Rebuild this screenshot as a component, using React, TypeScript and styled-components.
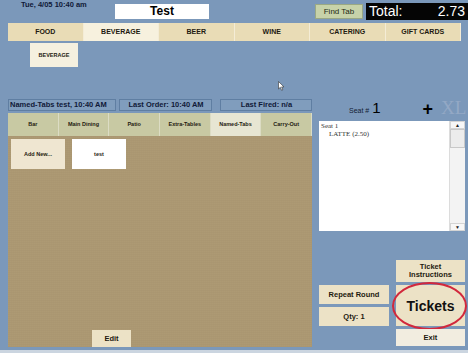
import React from 'react';
import styled, { createGlobalStyle } from 'styled-components';

const GlobalStyle = createGlobalStyle`
  html, body {
    margin: 0;
    padding: 0;
    background: #7b98ba;
  }
  * { box-sizing: border-box; }
`

const Screen = styled.div`
  position: relative;
  width: 468px;
  height: 353px;
  overflow: hidden;
  display: flex;
  flex-direction: column;
  background: #7b98ba;
  font-family: 'Liberation Sans', Arial, sans-serif;
  color: #141c34;
  border-bottom: 3px solid #cbd5e0;
`

const TopBar = styled.div`
  display: flex;
  align-items: flex-start;
  height: 23px;
  padding-left: 21px;
`

const DateText = styled.div`
  width: 94px;
  font-size: 7.5px;
  font-weight: bold;
  line-height: 9px;
  color: #101a38;
  white-space: nowrap;
`

const TitleBox = styled.div`
  margin-top: 4px;
  width: 94px;
  height: 15px;
  background: #fff;
  font-size: 12px;
  font-weight: bold;
  line-height: 15px;
  text-align: center;
  color: #000;
`

const FindTab = styled.div`
  margin-left: auto;
  margin-top: 4px;
  width: 48px;
  height: 15px;
  background: #c7d2a9;
  border: 1px solid #9aa884;
  font-size: 8px;
  line-height: 13px;
  text-align: center;
  color: #1e2a14;
`

const TotalBox = styled.div`
  display: flex;
  justify-content: space-between;
  margin-left: 3px;
  margin-top: 3px;
  width: 102px;
  height: 17px;
  padding: 0 3px;
  background: #050505;
  color: #fff;
  font-size: 14px;
  line-height: 17px;
`

const CategoryBar = styled.div`
  display: grid;
  grid-template-columns: repeat(6, 1fr);
  margin: 0 7px 0 8px;
  height: 18px;
`

const Category = styled.div<{ $active?: boolean }>`
  background: ${p => (p.$active ? '#f7f1de' : '#e9dcb6')};
  border-right: 1px solid #f4ecd6;
  font-size: 7px;
  font-weight: bold;
  line-height: 18px;
  text-align: center;
  color: #1e1a10;
`

const SubRow = styled.div`
  height: 56px;
  padding: 2px 0 0 30px;
`

const SubButton = styled.div`
  width: 48px;
  height: 24px;
  background: #f5f0df;
  font-size: 5.5px;
  font-weight: bold;
  line-height: 24px;
  text-align: center;
  color: #1e1a10;
`

const Cursor = styled.svg`
  position: absolute;
  left: 278px;
  top: 81px;
`

const Main = styled.div`
  flex: 1;
  display: grid;
  grid-template-columns: 304px 146px;
  column-gap: 7px;
  padding-left: 8px;
`

const LeftCol = styled.div`
  display: flex;
  flex-direction: column;
`

const InfoRow = styled.div`
  display: flex;
  margin-top: 2px;
  height: 12px;
`

const InfoBox = styled.div<{ $width: number; $gap?: number; $align?: string }>`
  width: ${p => p.$width}px;
  margin-left: ${p => p.$gap || 0}px;
  border: 1px solid #5f7ea2;
  background: #809dbd;
  font-size: 7.5px;
  font-weight: bold;
  line-height: 10px;
  text-align: ${p => p.$align || 'center'};
  padding-left: 1px;
  color: #111a38;
  white-space: nowrap;
  overflow: hidden;
`

const TabRow = styled.div`
  display: grid;
  grid-template-columns: repeat(6, 1fr);
  margin-top: 2px;
  height: 23px;
`

const Tab = styled.div<{ $active?: boolean }>`
  background: ${p => (p.$active ? '#e7e6d3' : '#c8c9a3')};
  border-right: 1px solid #dcdcc4;
  font-size: 5.5px;
  font-weight: bold;
  line-height: 23px;
  text-align: center;
  color: #1e1a10;
`

const TablePanel = styled.div`
  flex: 1;
  display: flex;
  flex-direction: column;
  padding: 3px 0 0 3px;
  margin-bottom: 3px;
  background-color: #ac9872;
  background-image:
    repeating-linear-gradient(0deg, rgba(0, 0, 0, 0.015) 0 1px, transparent 1px 2px),
    repeating-linear-gradient(90deg, rgba(255, 255, 255, 0.015) 0 1px, transparent 1px 2px);
`

const TableRow = styled.div`
  display: flex;
  gap: 7px;
`

const TableButton = styled.div<{ $white?: boolean }>`
  width: 54px;
  height: 30px;
  background: ${p => (p.$white ? '#ffffff' : '#efe6d1')};
  font-size: 5.5px;
  font-weight: bold;
  line-height: 30px;
  text-align: center;
  color: #1e1a10;
`

const EditButton = styled.div`
  margin-top: auto;
  margin-left: 81px;
  width: 39px;
  height: 17px;
  background: #ece2c6;
  font-size: 7.5px;
  font-weight: bold;
  line-height: 17px;
  text-align: center;
  color: #1e1a10;
`

const RightCol = styled.div`
  display: flex;
  flex-direction: column;
`

const SeatHeader = styled.div`
  display: flex;
  align-items: flex-end;
  height: 24px;
  padding-bottom: 5px;
  white-space: nowrap;
`

const SeatLabel = styled.div`
  margin-left: 30px;
  font-size: 7px;
  color: #141c34;
  display: flex;
  align-items: baseline;
  gap: 3px;

  & b {
    font-size: 15px;
    font-weight: normal;
    color: #000;
  }
`

const Plus = styled.div`
  margin-left: 42px;
  font-size: 18px;
  font-weight: bold;
  line-height: 14px;
  color: #000;
`

const XL = styled.div`
  flex-shrink: 0;
  margin-left: 8px;
  font-family: 'Liberation Serif', serif;
  font-size: 19px;
  line-height: 16px;
  color: #93a8c5;
`

const OrderList = styled.div`
  display: flex;
  height: 110px;
  background: #fff;
`

const OrderLines = styled.div`
  flex: 1;
  padding: 1px 2px;
  font-family: 'Liberation Serif', serif;
  font-size: 7px;
  line-height: 8px;
  color: #333;
`

const Indent = styled.div`
  padding-left: 8px;
`

const ScrollBar = styled.div`
  display: flex;
  flex-direction: column;
  width: 16px;
  background: #f3f3f3;
  border-left: 1px solid #dcdcdc;
`

const ScrollArrow = styled.div`
  height: 8px;
  background: #f7f7f7;
  border: 1px solid #d4d4d4;
  font-size: 5px;
  line-height: 6px;
  text-align: center;
  color: #222;
`

const ScrollThumb = styled.div`
  height: 19px;
  background: #ececec;
  border: 1px solid #c8c8c8;
`

const ScrollTrack = styled.div`
  flex: 1;
`

const ButtonGrid = styled.div`
  display: grid;
  grid-template-columns: 70px 1fr;
  grid-template-rows: 22px 19px 19px 17px;
  column-gap: 7px;
  row-gap: 3px;
  margin-top: 29px;
`

const ActionButton = styled.div<{ $col: number; $row: string; $light?: boolean }>`
  position: relative;
  grid-column: ${p => p.$col};
  grid-row: ${p => p.$row};
  display: flex;
  align-items: center;
  justify-content: center;
  background: ${p => (p.$light ? '#f2ede0' : '#ece2c6')};
  font-size: 7.5px;
  font-weight: bold;
  line-height: 8px;
  text-align: center;
  color: #1e1a10;
`

const BigLabel = styled.span`
  font-size: 14px;
  color: #111;
`

const Circle = styled.span`
  position: absolute;
  top: -3px;
  bottom: -4px;
  left: -4px;
  right: -2px;
  border: 2px solid #d2283c;
  border-radius: 50%;
`

const categories = ['FOOD', 'BEVERAGE', 'BEER', 'WINE', 'CATERING', 'GIFT CARDS']
const tabs = ['Bar', 'Main Dining', 'Patio', 'Extra-Tables', 'Named-Tabs', 'Carry-Out']

export default function App() {
  return (
    <>
      <GlobalStyle />
      <Screen>
        <TopBar>
          <DateText>Tue, 4/05 10:40 am</DateText>
          <TitleBox>Test</TitleBox>
          <FindTab>Find Tab</FindTab>
          <TotalBox>
            <span>Total:</span>
            <span>2.73</span>
          </TotalBox>
        </TopBar>

        <CategoryBar>
          {categories.map(c => (
            <Category key={c} $active={c === 'BEVERAGE'}>{c}</Category>
          ))}
        </CategoryBar>

        <SubRow>
          <SubButton>BEVERAGE</SubButton>
        </SubRow>

        <Cursor width="7" height="10" viewBox="0 0 7 10">
          <path d="M0.5 0.5 L0.5 8 L2.3 6.3 L3.6 9.3 L4.8 8.8 L3.6 5.9 L6 5.9 Z" fill="#fff" stroke="#333" strokeWidth="0.6" />
        </Cursor>

        <Main>
          <LeftCol>
            <InfoRow>
              <InfoBox $width={108} $align="left">Named-Tabs test, 10:40 AM</InfoBox>
              <InfoBox $width={93} $gap={3}>Last Order: 10:40 AM</InfoBox>
              <InfoBox $width={92} $gap={8}>Last Fired: n/a</InfoBox>
            </InfoRow>
            <TabRow>
              {tabs.map(t => (
                <Tab key={t} $active={t === 'Named-Tabs'}>{t}</Tab>
              ))}
            </TabRow>
            <TablePanel>
              <TableRow>
                <TableButton>Add New...</TableButton>
                <TableButton $white>test</TableButton>
              </TableRow>
              <EditButton>Edit</EditButton>
            </TablePanel>
          </LeftCol>

          <RightCol>
            <SeatHeader>
              <SeatLabel>Seat # <b>1</b></SeatLabel>
              <Plus>+</Plus>
              <XL>XL</XL>
            </SeatHeader>
            <OrderList>
              <OrderLines>
                <div>Seat 1</div>
                <Indent>LATTE (2.50)</Indent>
              </OrderLines>
              <ScrollBar>
                <ScrollArrow>▲</ScrollArrow>
                <ScrollThumb />
                <ScrollTrack />
                <ScrollArrow>▼</ScrollArrow>
              </ScrollBar>
            </OrderList>
            <ButtonGrid>
              <ActionButton $col={2} $row="1">Ticket<br />Instructions</ActionButton>
              <ActionButton $col={1} $row="2">Repeat Round</ActionButton>
              <ActionButton $col={2} $row="2 / span 2">
                <BigLabel>Tickets</BigLabel>
                <Circle />
              </ActionButton>
              <ActionButton $col={1} $row="3">Qty: 1</ActionButton>
              <ActionButton $col={2} $row="4" $light>Exit</ActionButton>
            </ButtonGrid>
          </RightCol>
        </Main>
      </Screen>
    </>
  )
}
